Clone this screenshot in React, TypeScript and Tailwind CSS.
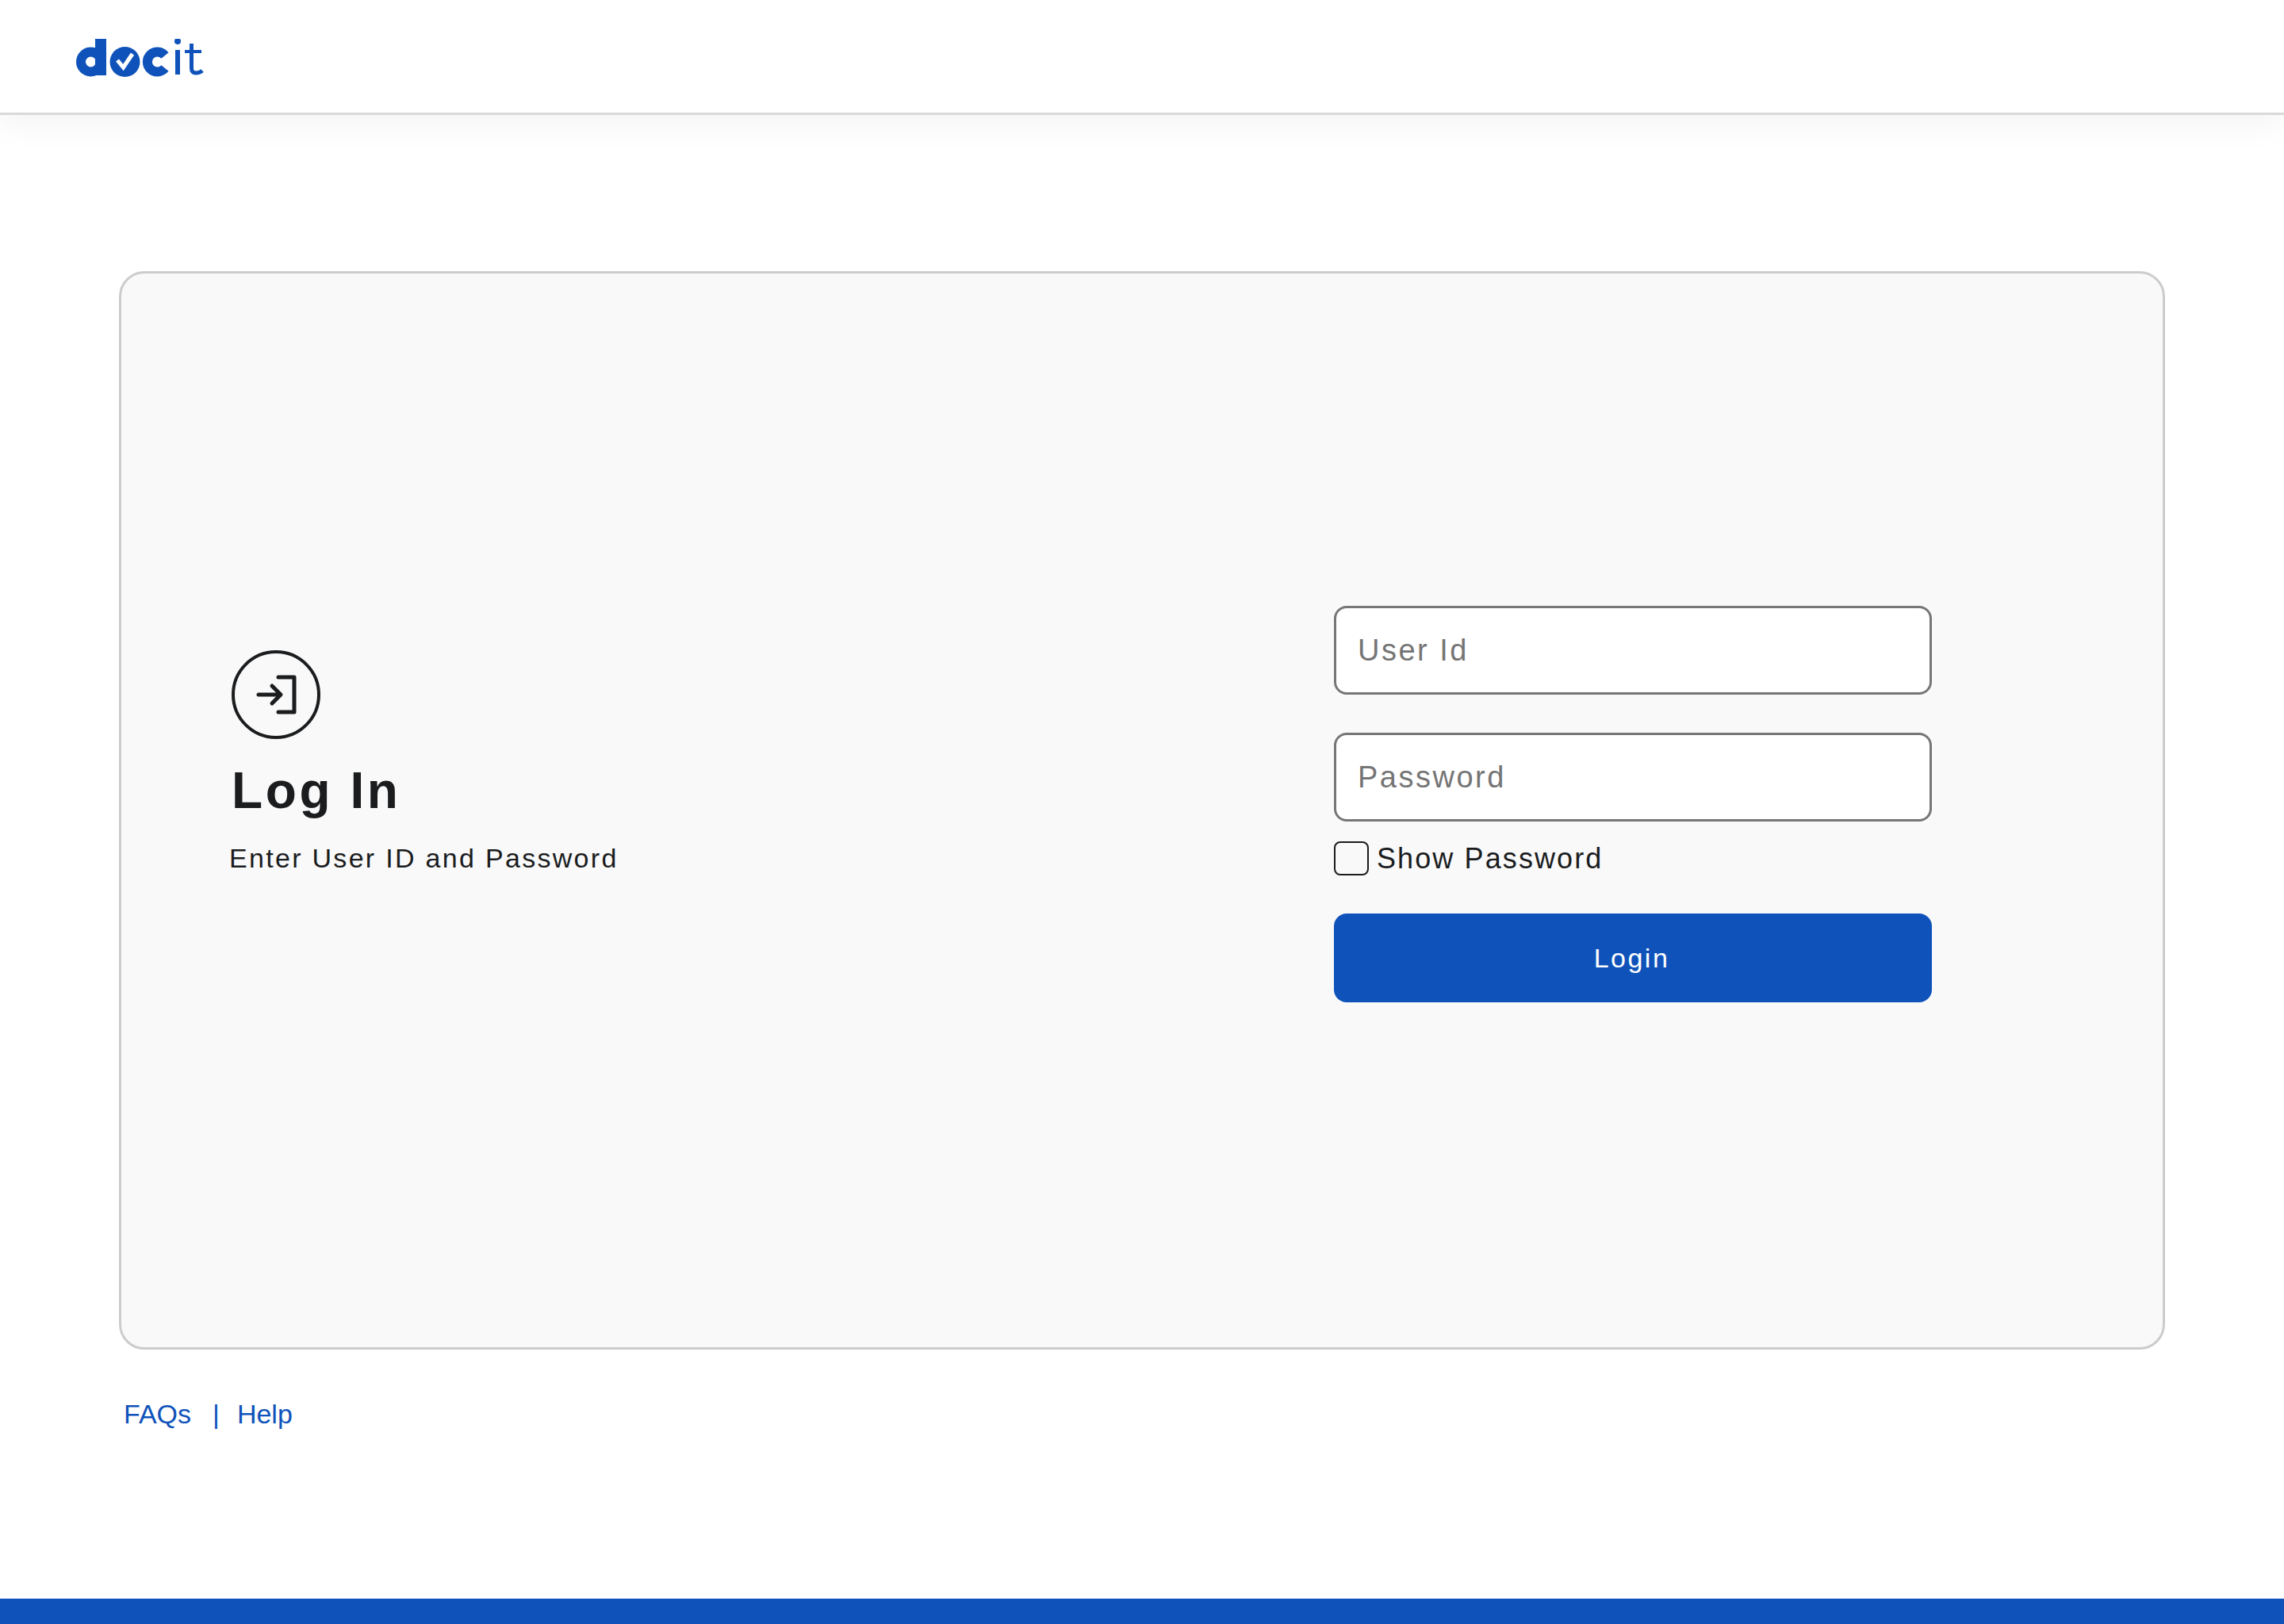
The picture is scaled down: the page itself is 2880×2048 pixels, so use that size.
import React from 'react';

const Logo = () => (
  <svg width="162" height="48" viewBox="95 49 162 48" className="block">
    {/* d */}
    <circle cx="114.5" cy="78" r="12.5" fill="none" stroke="#0f53ba" strokeWidth="12" />
    <rect x="120" y="49" width="14" height="46" fill="#0f53ba" />
    {/* o with the check mark */}
    <circle cx="157.5" cy="78" r="19" fill="#0f53ba" />
    <path d="M148 76 L155.5 85 L167 68" fill="none" stroke="#ffffff" strokeWidth="5" />
    {/* c */}
    <path d="M208 70 A12.5 12.5 0 1 0 208 86" fill="none" stroke="#0f53ba" strokeWidth="12" />
    {/* i */}
    <circle cx="224" cy="52" r="4" fill="#0f53ba" />
    <rect x="221" y="63" width="6" height="31" fill="#0f53ba" />
    {/* t */}
    <path d="M241.5 55 V86 Q241.5 92 247 92 Q252 92 255 89" fill="none" stroke="#0f53ba" strokeWidth="5" />
    <rect x="233" y="63" width="21" height="4" fill="#0f53ba" />
  </svg>
);

const LoginIcon = () => (
  <svg width="112" height="112" viewBox="0 0 112 112" fill="none" stroke="#1a1c1e" className="block">
    <circle cx="56" cy="56" r="54" strokeWidth="4" />
    <path d="M34 56 H61 M51 45 L62 56 L51 67 M59 34 H79 V78 H59" strokeWidth="5" strokeLinecap="round" strokeLinejoin="round" />
  </svg>
);

export default function App() {
  return (
    <div className="flex h-[2048px] flex-col bg-white font-['Liberation_Sans',Arial,sans-serif]">
      <header className="h-[145px] border-b-[3px] border-[#d9d9d9] bg-white pl-[95px] pt-[49px] shadow-[0_10px_40px_rgba(0,0,0,0.05)]">
        <Logo />
      </header>

      <main className="flex flex-1 flex-col px-[150px] pt-[197px]">
        <section className="flex h-[1360px] w-[2580px] rounded-[32px] border-[3px] border-[#cccccc] bg-[#f9f9f9]">
          <div className="flex w-[1529px] flex-col pl-[136px] pt-[475px]">
            <div className="pl-[3px]">
              <LoginIcon />
            </div>
            <h1 className="mt-[28px] pl-[3px] text-[64px] font-bold leading-[74px] tracking-[3.6px] text-[#1a1c1e]">Log In</h1>
            <p className="mt-[29px] text-[34px] leading-[39px] tracking-[2.3px] text-[#1a1c1e]">Enter User ID and Password</p>
          </div>

          <form className="flex w-[754px] flex-col pt-[419px]">
            <input
              type="text"
              placeholder="User Id"
              className="h-[112px] rounded-[16px] border-[3px] border-[#767676] bg-white px-[27px] text-[38px] tracking-[2.5px] outline-none placeholder:text-[#757575]"
            />
            <input
              type="password"
              placeholder="Password"
              className="mt-[48px] h-[112px] rounded-[16px] border-[3px] border-[#767676] bg-white px-[27px] text-[38px] tracking-[2.5px] outline-none placeholder:text-[#757575]"
            />
            <label className="mt-[25px] flex h-[43px] items-center gap-[10px] text-[36px] tracking-[2.1px] text-[#1a1c1e]">
              <span className="h-[43px] w-[44px] rounded-[8px] border-2 border-[#1a1c1e] bg-transparent" />
              Show Password
            </label>
            <button
              type="button"
              className="mt-[48px] h-[112px] rounded-[16px] bg-[#0f53ba] pr-[3px] text-[34px] tracking-[2.5px] text-white"
            >
              Login
            </button>
          </form>
        </section>

        <nav className="mt-[62px] flex items-center pl-[6px] text-[34px] leading-[39px] text-[#0f53ba]">
          <a href="#">FAQs</a>
          <span className="ml-[27px]">|</span>
          <a href="#" className="ml-[22px]">Help</a>
        </nav>
      </main>

      <footer className="h-[32px] bg-[#0f53ba]" />
    </div>
  );
}
